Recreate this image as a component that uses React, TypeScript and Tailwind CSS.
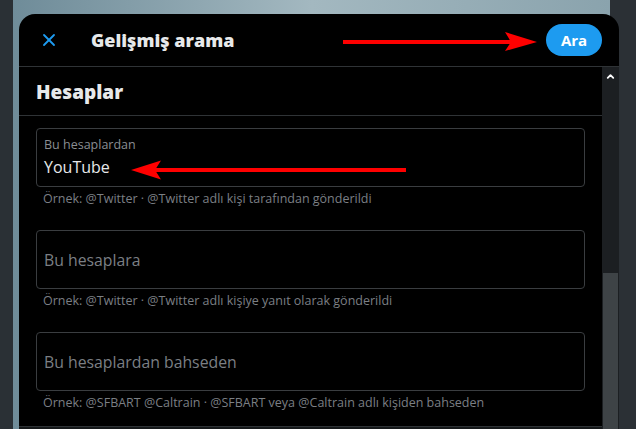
import { X, ChevronUp } from "lucide-react";

const fields = [
  {
    label: "Bu hesaplardan",
    value: "YouTube",
    hint: "Örnek: @Twitter · @Twitter adlı kişi tarafından gönderildi",
  },
  {
    label: "Bu hesaplara",
    value: "",
    hint: "Örnek: @Twitter · @Twitter adlı kişiye yanıt olarak gönderildi",
  },
  {
    label: "Bu hesaplardan bahseden",
    value: "",
    hint: "Örnek: @SFBART @Caltrain · @SFBART veya @Caltrain adlı kişiden bahseden",
  },
];

function Field({ label, value, hint }: { label: string; value: string; hint: string }) {
  return (
    <div className="flex flex-col">
      <div className="h-[59px] rounded-[4px] border border-[#3a3d40] px-[7px] flex flex-col justify-center">
        {value ? (
          <>
            <span className="text-[12.5px] leading-[16px] text-[#8a8e93]">{label}</span>
            <span className="text-[16px] leading-[22px] text-[#e7e9ea] mt-[3px]">{value}</span>
          </>
        ) : (
          <span className="text-[15.8px] leading-[22px] text-[#7b7f84]">{label}</span>
        )}
      </div>
      <p className="px-[7px] pt-[3px] text-[12.5px] leading-[18px] text-[#7b7f84]">{hint}</p>
    </div>
  );
}

// red annotation arrows drawn over the dialog
function Arrows() {
  return (
    <svg className="absolute inset-0 pointer-events-none" width="636" height="429">
      <rect x="343" y="40" width="168" height="4" fill="#ff0000" />
      <polygon points="505,32 537,42 505,51 511,42" fill="#ff0000" />
      <rect x="155" y="168" width="251" height="4" fill="#ff0000" />
      <polygon points="161,160.5 131,170 161,179.5 155,170" fill="#ff0000" />
    </svg>
  );
}

export default function App() {
  return (
    <div
      className="relative w-[636px] h-[429px] overflow-hidden bg-[#2a3035] flex"
      style={{ fontFamily: '"Open Sans", "Noto Sans", sans-serif' }}
    >
      <div className="w-[13px] bg-[#2a3035]" />
      <div className="w-[597px] bg-gradient-to-r from-[#6f8c99] via-[#a3b8c0] to-[#8aa3ad]" />
      <div className="flex-1 bg-[#2b3035]" />

      {/* dialog */}
      <div className="absolute left-[19px] top-[14px] w-[600px] h-[420px] bg-black rounded-t-[16px] flex flex-col">
        <div className="h-[53px] shrink-0 flex items-center border-b border-[#2f3336] pl-[20px] pr-[17px]">
          <X className="w-[20px] h-[20px] text-[#1d9bf0]" strokeWidth={2.2} />
          <h1 className="ml-[32px] text-[18px] font-extrabold text-[#e7e9ea]">Gelişmiş arama</h1>
          <button className="ml-auto h-[32px] w-[56px] rounded-full bg-[#1d9bf0] text-white text-[15px] font-bold">
            Ara
          </button>
        </div>

        <div className="flex flex-1 min-h-0">
          <div className="flex-1 flex flex-col">
            <div className="h-[49px] shrink-0 flex items-center px-[17px] pt-[3px] border-b border-[#2f3336]">
              <h2 className="text-[19px] font-extrabold text-[#e7e9ea]">Hesaplar</h2>
            </div>
            <div className="flex flex-col gap-[22px] px-[17px] pt-[12px]">
              {fields.map((f) => (
                <Field key={f.label} {...f} />
              ))}
            </div>
            <div className="mt-auto h-[8px] border-t border-[#2f3336] bg-[#15181a]" />
          </div>

          {/* scrollbar */}
          <div className="w-[17px] bg-[#1c1f22] flex flex-col">
            <div className="h-[19px] flex items-center justify-center">
              <ChevronUp className="w-[11px] h-[11px] text-white" strokeWidth={4} />
            </div>
            <div className="h-[187px]" />
            <div className="flex-1 mx-[1px] bg-[#3e4346]" />
          </div>
        </div>
      </div>

      <Arrows />
    </div>
  );
}
